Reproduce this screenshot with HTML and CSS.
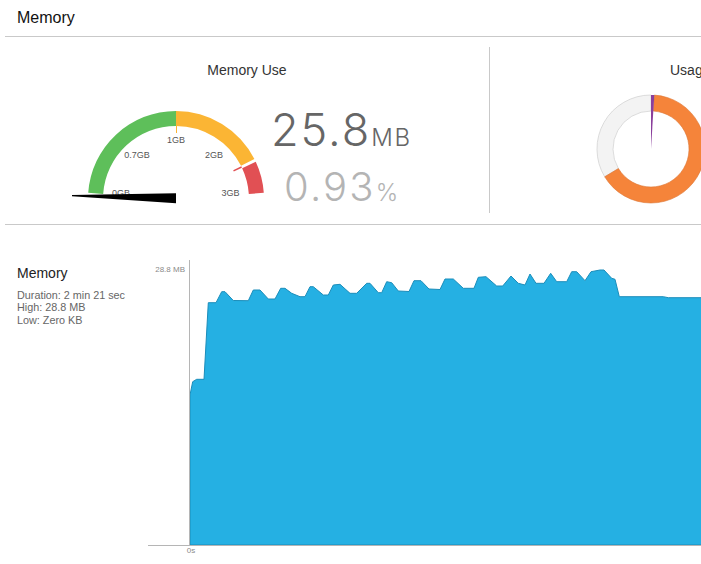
FILE: index.html
```html
<!DOCTYPE html>
<html lang="en">
<head>
<meta charset="utf-8">
<title>Memory</title>
<link rel="stylesheet" href="styles.css">
</head>
<body>
<div class="page">
  <header class="hdr"><h1 class="hdr-title">Memory</h1></header>

  <section class="summary">
    <div class="panel panel-use">
      <h2 class="panel-title">Memory Use</h2>
      <div class="use-row">
        <svg class="gauge" width="210" height="106" viewBox="60 100 210 106">
          <path class="seg-green" d="M88.21,192.86 A88,88 0 0,1 176,111 L176,126 A73,73 0 0,0 103.18,193.91 Z"/>
          <path class="seg-yellow" d="M176,111 A88,88 0 0,1 254.4,159.05 L241.04,165.86 A73,73 0 0,0 176,126 Z"/>
          <path class="seg-red" d="M255.75,161.81 A88,88 0 0,1 263.79,192.86 L248.82,193.91 A73,73 0 0,0 242.16,168.15 Z"/>
          <line class="tick-yellow" x1="176.5" y1="111" x2="176.5" y2="133"/>
          <line class="tick-red" x1="233.5" y1="170.9" x2="241.6" y2="167"/>
          <text class="g-lbl" x="176" y="143" text-anchor="middle">1GB</text>
          <text class="g-lbl" x="137" y="158" text-anchor="middle">0.7GB</text>
          <text class="g-lbl" x="214" y="158" text-anchor="middle">2GB</text>
          <text class="g-lbl" x="121" y="195.5" text-anchor="middle">0GB</text>
          <text class="g-lbl" x="230.5" y="196" text-anchor="middle">3GB</text>
          <polygon class="needle" points="72,195 176,193.3 176,203.3 72,196.2"/>
        </svg>
        <div class="readout">
          <div class="big">25.8<span class="big-unit">MB</span></div>
          <div class="pct">0.93<span class="pct-unit">%</span></div>
        </div>
      </div>
    </div>

    <div class="panel panel-usage">
      <h2 class="panel-title usage-title">Usage</h2>
      <svg class="donut" width="111" height="120" viewBox="590 90 111 120">
        <path class="d-gray" d="M604.71,176.81 A54,54 0 0,1 651,95 L651,111 A38,38 0 0,0 618.43,168.57 Z"/>
        <path class="d-orange" d="M654.3,95.1 A54,54 0 1,1 604.71,176.81 L618.43,168.57 A38,38 0 1,0 653.32,111.07 Z"/>
        <path class="d-purple" d="M651,149 L651,95 A54,54 0 0,1 654.3,95.1 Z"/>
      </svg>
    </div>
  </section>

  <section class="detail">
    <div class="info">
      <h3 class="info-title">Memory</h3>
      <ul class="info-list">
        <li>Duration: 2 min 21 sec</li>
        <li>High: 28.8 MB</li>
        <li>Low: Zero KB</li>
      </ul>
    </div>
    <svg class="chart" width="561" height="314" viewBox="140 250 561 314">
      <path class="area" d="M190,545 L190,395 L192.7,381.7 L196.7,379.3 L204,379.3 L208.3,302.7 L216,302.7 L221.7,291.7 L225,291.7 L233.3,300.5 L248.3,300.7 L253.3,290 L260,290 L268.3,299 L275,299 L280.7,288.3 L285,288.3 L291.7,293.3 L300,296.7 L305,296.7 L310,286.7 L313.3,286.7 L323.3,295 L328.3,295 L333.3,285 L340,284.3 L350,293.3 L356.7,293.3 L366.7,283.3 L370,283.3 L378.3,292.7 L381.7,292.7 L386.7,281.7 L391.7,282.7 L398.3,291 L409,291.5 L414,280.7 L421,280.7 L429,289 L440,289.5 L445,279 L453.3,279 L463.3,288.3 L474,288.3 L478.3,277.3 L486,276.7 L496.7,286 L502.7,286 L511,276 L518.3,283.3 L525,285 L530,274 L536,283.3 L544,283.3 L550.7,273.3 L556.7,281.7 L566.7,281.7 L571.7,271.7 L576.7,271.7 L585,280.7 L591,271.7 L600,270 L604,270 L611.7,278.3 L615,279.3 L619.3,296.7 L663.3,296.7 L668.3,297.7 L702,297.7 L702,545 Z"/>
      <line class="axis" x1="189.5" y1="260" x2="189.5" y2="545.5"/>
      <line class="axis" x1="148" y1="545.5" x2="701" y2="545.5"/>
      <text class="c-lbl" x="185" y="272" text-anchor="end">28.8 MB</text>
      <text class="c-lbl" x="191" y="553" text-anchor="middle">0s</text>
    </svg>
  </section>
</div>
</body>
</html>
```

FILE: styles.css
```css
* {
  box-sizing: border-box;
  margin: 0;
  padding: 0;
}

html,
body {
  width: 701px;
  height: 564px;
  overflow: hidden;
  background: #ffffff;
}

body {
  font-family: "Liberation Sans", Arial, sans-serif;
  color: #222222;
}

.page {
  width: 701px;
}

/* header */
.hdr {
  margin-left: 5px;
  height: 37px;
  padding: 9px 0 0 12px;
  border-bottom: 1px solid #c9c9c9;
}

.hdr-title {
  font-size: 16px;
  line-height: 18px;
  font-weight: normal;
  color: #111111;
}

/* summary row */
.summary {
  display: flex;
  margin-left: 5px;
  padding: 10px 0 11px 0;
  border-bottom: 1px solid #c9c9c9;
  width: 696px;
  overflow: hidden;
}

.panel {
  height: 166px;
  padding-top: 15px;
  flex-shrink: 0;
}

.panel-use {
  width: 485px;
  border-right: 1px solid #c9c9c9;
}

.panel-usage {
  width: 300px;
}

.panel-title {
  font-size: 14px;
  line-height: 16px;
  font-weight: normal;
  color: #333333;
  text-align: center;
}

.usage-title {
  text-align: left;
  padding-left: 180px;
}

.use-row {
  display: flex;
  margin-top: 22px;
  padding-left: 55px;
}

.gauge {
  display: block;
  flex-shrink: 0;
}

.seg-green { fill: #5ebf5a; }
.seg-yellow { fill: #fbb534; }
.seg-red { fill: #e15054; }

.tick-yellow {
  stroke: #fbb534;
  stroke-width: 1;
}

.tick-red {
  stroke: #e15054;
  stroke-width: 1.4;
}

.g-lbl {
  font-family: "Liberation Sans", Arial, sans-serif;
  font-size: 9px;
  fill: #555555;
}

.needle { fill: #000000; }

.readout {
  margin-left: 1px;
  padding-top: 7px;
  font-family: Inter, "Liberation Sans", Arial, sans-serif;
  font-weight: 350;
  white-space: nowrap;
}

.big {
  font-size: 45px;
  line-height: 45px;
  letter-spacing: 2px;
  color: #666666;
}

.big-unit {
  font-size: 24px;
  letter-spacing: 1.5px;
}

.pct {
  margin-top: 7px;
  margin-left: 13px;
  font-size: 40px;
  line-height: 40px;
  letter-spacing: 2.2px;
  color: #b4b4b4;
}

.pct-unit {
  font-size: 24px;
  letter-spacing: 0;
}

.donut {
  display: block;
  margin: 12px 0 0 100px;
}

.d-gray {
  fill: #f3f3f3;
  stroke: #d3d3d3;
  stroke-width: 0.8;
}

.d-orange {
  fill: #f5843a;
  stroke: #dc7534;
  stroke-width: 0.6;
}

.d-purple { fill: #8a3f9c; }

/* detail */
.detail {
  display: flex;
  align-items: flex-start;
}

.info {
  width: 140px;
  flex-shrink: 0;
  padding: 40px 0 0 17px;
}

.info-title {
  font-size: 14px;
  line-height: 17px;
  font-weight: normal;
  color: #222222;
}

.info-list {
  list-style: none;
  margin-top: 7px;
  font-size: 10.8px;
  line-height: 12.3px;
  color: #666666;
  white-space: nowrap;
}

.chart {
  display: block;
  flex-shrink: 0;
  margin-top: 25px;
}

.area {
  fill: #25b0e3;
  stroke: #1b8dba;
  stroke-width: 1;
  stroke-linejoin: round;
}

.axis {
  stroke: #b5b5b5;
  stroke-width: 1;
}

.c-lbl {
  font-family: "Liberation Sans", Arial, sans-serif;
  font-size: 8px;
  fill: #8a8a8a;
}
```
